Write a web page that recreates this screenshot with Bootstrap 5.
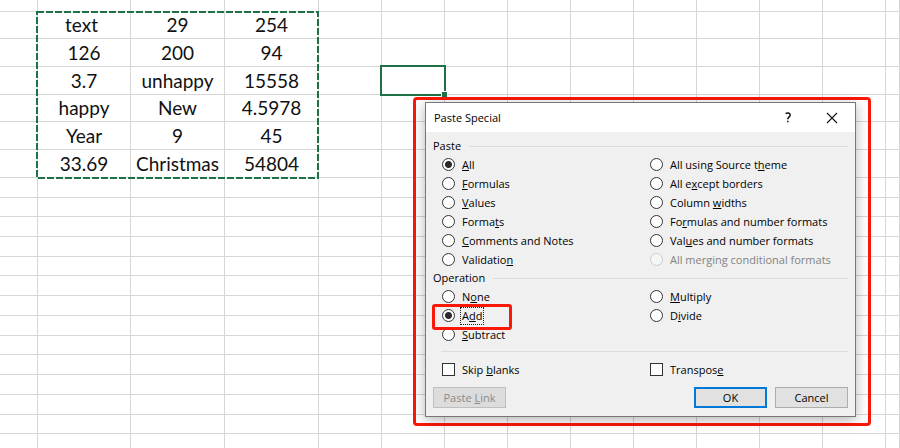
<!DOCTYPE html>
<html lang="en">
<head>
<meta charset="utf-8">
<meta name="viewport" content="width=device-width, initial-scale=1">
<title>Paste Special</title>
<link href="https://cdn.jsdelivr.net/npm/bootstrap@5.3.0/dist/css/bootstrap.min.css" rel="stylesheet">
<style>
  body { background: #fff; color: #111; overflow: hidden; min-height: 100vh; }

  /* Spreadsheet */
  .sheet { table-layout: fixed; border-collapse: separate; border-spacing: 0; font: 19px/26px Lato, "Open Sans", sans-serif; }
  .sheet td { padding: 0; border-right: 1px solid #d6d6d6; border-bottom: 1px solid #d6d6d6; text-align: center; white-space: nowrap; }
  .c-edge { width: 38px; }
  .c-wide { width: 94px; }
  .c-first { width: 93px; }
  .c-std { width: 63px; }
  .r-top td { height: 12px; }
  .r-27 td { height: 27px; }
  .r-28 td { height: 28px; }
  .r-19 td { height: 19px; }
  .r-20 td { height: 20px; }
  .ants { left: -2px; top: -1px; width: 283px; height: 168px; pointer-events: none; z-index: 1; }
  .active-cell { inset: -2px; border: 2px solid #1e7145; z-index: 1; }
  .active-cell::after { content: ""; position: absolute; right: -4px; bottom: -4px; width: 7px; height: 7px; background: #1e7145; border: 1px solid #fff; }

  /* Dialog */
  .callout-frame { left: 413px; top: 97px; width: 458px; padding: 2px 12px 6px 9px; border: 3px solid #fb1808; border-radius: 4px; z-index: 3; }
  .dlg { background: #f0f0f0; border: 1px solid #777; box-shadow: 0 3px 12px rgba(0,0,0,.3); font: 11px/14px "Open Sans", "Noto Sans", sans-serif; color: #000; }
  .dlg-title { background: #fff; height: 29px; padding: 0 1px 0 8px; }
  .dlg-title h1 { font-size: 11px; line-height: 14px; font-weight: 400; }
  .icon-btn { width: 44px; height: 28px; border: 0; background: none; padding: 0; color: #111; }
  .dlg-body { padding: 7px 7px 8px; }
  .dlg fieldset + fieldset { margin-top: 2px; }
  .group-head { height: 14px; font-size: 11px; line-height: 14px; }
  .rule { height: 1px; background: #dcdcdc; }
  .section-rule { margin: 7px 0 0 8px; }
  .options { padding: 2px 0 0 9px; }
  .options-col { flex: none; width: 208px; }
  .opt { height: 19px; gap: 7px; }
  .opt input { appearance: none; width: 13px; height: 13px; margin: 0; border: 1px solid #333; background: #fff; flex: none; }
  .opt input[type=radio] { border-radius: 50%; }
  .opt input[type=radio]:checked { background: radial-gradient(circle, #2b2b2b 3px, #fff 4px); }
  .opt input:disabled { border-color: #ccc; background: #f6f6f6; }
  .opt input:disabled + label { color: #838383; }
  .focus-box { outline: 1px dotted #222; outline-offset: 1px; }
  .callout-add { left: -10px; top: -2px; width: 80px; height: 26px; border: 3px solid #fb1808; border-radius: 3px; pointer-events: none; z-index: 2; }
  .dlg-btn { width: 73px; height: 21px; padding: 0; border: 1px solid #adadad; background: #e1e1e1; color: #000; }
  .dlg-btn:disabled { border-color: #bfbfbf; background: #dcdcdc; color: #8a8a8a; }
  .dlg-btn.default-btn { border: 2px solid #0078d7; }
</style>
</head>
<body>
<main class="position-relative">
  <table class="sheet w-100">
    <colgroup>
      <col class="c-edge"><col class="c-first"><col class="c-wide"><col class="c-wide">
      <col class="c-std"><col class="c-std"><col class="c-std"><col class="c-std"><col class="c-std"><col class="c-std"><col class="c-std"><col class="c-std"><col class="c-std"><col>
    </colgroup>
    <tbody>
      <tr class="r-top"><td></td><td></td><td></td><td></td><td></td><td></td><td></td><td></td><td></td><td></td><td></td><td></td><td></td><td></td></tr>
      <tr class="r-27"><td></td><td class="position-relative">text&nbsp;<svg class="ants position-absolute" aria-hidden="true"><rect x="1" y="1" width="281" height="166" fill="none" stroke="#1e7145" stroke-width="2" stroke-dasharray="7 2"/></svg></td><td>29</td><td>254</td><td></td><td></td><td></td><td></td><td></td><td></td><td></td><td></td><td></td><td></td></tr>
      <tr class="r-28"><td></td><td>126</td><td>200</td><td>94</td><td></td><td></td><td></td><td></td><td></td><td></td><td></td><td></td><td></td><td></td></tr>
      <tr class="r-28"><td></td><td>3.7</td><td>unhappy</td><td>15558</td><td></td><td class="position-relative"><div class="active-cell position-absolute"></div></td><td></td><td></td><td></td><td></td><td></td><td></td><td></td><td></td></tr>
      <tr class="r-27"><td></td><td>happy</td><td>New</td><td>4.5978</td><td></td><td></td><td></td><td></td><td></td><td></td><td></td><td></td><td></td><td></td></tr>
      <tr class="r-28"><td></td><td>Year</td><td>9</td><td>45</td><td></td><td></td><td></td><td></td><td></td><td></td><td></td><td></td><td></td><td></td></tr>
      <tr class="r-28"><td></td><td>33.69</td><td>Christmas</td><td>54804</td><td></td><td></td><td></td><td></td><td></td><td></td><td></td><td></td><td></td><td></td></tr>
      <tr class="r-20"><td></td><td></td><td></td><td></td><td></td><td></td><td></td><td></td><td></td><td></td><td></td><td></td><td></td><td></td></tr>
      <tr class="r-19"><td></td><td></td><td></td><td></td><td></td><td></td><td></td><td></td><td></td><td></td><td></td><td></td><td></td><td></td></tr>
      <tr class="r-20"><td></td><td></td><td></td><td></td><td></td><td></td><td></td><td></td><td></td><td></td><td></td><td></td><td></td><td></td></tr>
      <tr class="r-20"><td></td><td></td><td></td><td></td><td></td><td></td><td></td><td></td><td></td><td></td><td></td><td></td><td></td><td></td></tr>
      <tr class="r-19"><td></td><td></td><td></td><td></td><td></td><td></td><td></td><td></td><td></td><td></td><td></td><td></td><td></td><td></td></tr>
      <tr class="r-20"><td></td><td></td><td></td><td></td><td></td><td></td><td></td><td></td><td></td><td></td><td></td><td></td><td></td><td></td></tr>
      <tr class="r-20"><td></td><td></td><td></td><td></td><td></td><td></td><td></td><td></td><td></td><td></td><td></td><td></td><td></td><td></td></tr>
      <tr class="r-20"><td></td><td></td><td></td><td></td><td></td><td></td><td></td><td></td><td></td><td></td><td></td><td></td><td></td><td></td></tr>
      <tr class="r-19"><td></td><td></td><td></td><td></td><td></td><td></td><td></td><td></td><td></td><td></td><td></td><td></td><td></td><td></td></tr>
      <tr class="r-20"><td></td><td></td><td></td><td></td><td></td><td></td><td></td><td></td><td></td><td></td><td></td><td></td><td></td><td></td></tr>
      <tr class="r-20"><td></td><td></td><td></td><td></td><td></td><td></td><td></td><td></td><td></td><td></td><td></td><td></td><td></td><td></td></tr>
      <tr class="r-20"><td></td><td></td><td></td><td></td><td></td><td></td><td></td><td></td><td></td><td></td><td></td><td></td><td></td><td></td></tr>
      <tr class="r-19"><td></td><td></td><td></td><td></td><td></td><td></td><td></td><td></td><td></td><td></td><td></td><td></td><td></td><td></td></tr>
      <tr class="r-20"><td></td><td></td><td></td><td></td><td></td><td></td><td></td><td></td><td></td><td></td><td></td><td></td><td></td><td></td></tr>
    </tbody>
  </table>

  <div class="callout-frame position-absolute">
    <form class="dlg" role="dialog" aria-labelledby="dlg-name">
      <div class="dlg-title d-flex align-items-center">
        <h1 class="m-0 me-auto" id="dlg-name">Paste Special</h1>
        <button type="button" class="icon-btn d-flex align-items-center justify-content-center" aria-label="Help">
          <svg width="8" height="11" viewBox="0 0 8 11" fill="none" stroke="currentColor" stroke-width="1.5"><path d="M1.6 1.7C3.4.4 6.2.9 6.2 3c0 1.900-2.400 2-2.400 4.300"/><path d="M3.800 8.800v1.500"/></svg>
        </button>
        <button type="button" class="icon-btn d-flex align-items-center justify-content-center" aria-label="Close">
          <svg width="12" height="12" viewBox="0 0 12 12" fill="none" stroke="currentColor" stroke-width="1.1"><path d="M1 1l10 10M11 1L1 11"/></svg>
        </button>
      </div>
      <div class="dlg-body">
        <fieldset>
          <div class="group-head d-flex align-items-center gap-2"><span>Paste</span><span class="rule flex-grow-1"></span></div>
          <div class="options d-flex">
            <div class="options-col">
              <div class="opt d-flex align-items-center"><input type="radio" name="paste" id="p1" checked><label for="p1"><u>A</u>ll</label></div>
              <div class="opt d-flex align-items-center"><input type="radio" name="paste" id="p2"><label for="p2"><u>F</u>ormulas</label></div>
              <div class="opt d-flex align-items-center"><input type="radio" name="paste" id="p3"><label for="p3"><u>V</u>alues</label></div>
              <div class="opt d-flex align-items-center"><input type="radio" name="paste" id="p4"><label for="p4">Forma<u>t</u>s</label></div>
              <div class="opt d-flex align-items-center"><input type="radio" name="paste" id="p5"><label for="p5"><u>C</u>omments and Notes</label></div>
              <div class="opt d-flex align-items-center"><input type="radio" name="paste" id="p6"><label for="p6">Validatio<u>n</u></label></div>
            </div>
            <div class="options-col">
              <div class="opt d-flex align-items-center"><input type="radio" name="paste" id="p7"><label for="p7">All using Source t<u>h</u>eme</label></div>
              <div class="opt d-flex align-items-center"><input type="radio" name="paste" id="p8"><label for="p8">All e<u>x</u>cept borders</label></div>
              <div class="opt d-flex align-items-center"><input type="radio" name="paste" id="p9"><label for="p9">Column <u>w</u>idths</label></div>
              <div class="opt d-flex align-items-center"><input type="radio" name="paste" id="p10"><label for="p10">Fo<u>r</u>mulas and number formats</label></div>
              <div class="opt d-flex align-items-center"><input type="radio" name="paste" id="p11"><label for="p11">Val<u>u</u>es and number formats</label></div>
              <div class="opt d-flex align-items-center"><input type="radio" name="paste" id="p12" disabled><label for="p12">All mer<u>g</u>ing conditional formats</label></div>
            </div>
          </div>
        </fieldset>
        <fieldset>
          <div class="group-head d-flex align-items-center gap-2"><span>Operation</span><span class="rule flex-grow-1"></span></div>
          <div class="options d-flex">
            <div class="options-col">
              <div class="opt d-flex align-items-center"><input type="radio" name="op" id="o1"><label for="o1">N<u>o</u>ne</label></div>
              <div class="opt d-flex align-items-center position-relative"><input type="radio" name="op" id="o2" checked><label class="focus-box" for="o2">A<u>d</u>d</label><span class="callout-add position-absolute"></span></div>
              <div class="opt d-flex align-items-center"><input type="radio" name="op" id="o3"><label for="o3"><u>S</u>ubtract</label></div>
            </div>
            <div class="options-col">
              <div class="opt d-flex align-items-center"><input type="radio" name="op" id="o4"><label for="o4"><u>M</u>ultiply</label></div>
              <div class="opt d-flex align-items-center"><input type="radio" name="op" id="o5"><label for="o5">D<u>i</u>vide</label></div>
            </div>
          </div>
        </fieldset>
        <div class="rule section-rule"></div>
        <div class="options d-flex pt-2">
          <div class="options-col"><div class="opt d-flex align-items-center"><input type="checkbox" id="k1"><label for="k1">Skip <u>b</u>lanks</label></div></div>
          <div class="options-col"><div class="opt d-flex align-items-center"><input type="checkbox" id="k2"><label for="k2">Transpos<u>e</u></label></div></div>
        </div>
        <div class="d-flex mt-2">
          <button type="button" class="dlg-btn me-auto" disabled>Paste <u>L</u>ink</button>
          <button type="submit" class="dlg-btn default-btn">OK</button>
          <button type="button" class="dlg-btn ms-2">Cancel</button>
        </div>
      </div>
    </form>
  </div>
</main>
<script src="https://cdn.jsdelivr.net/npm/bootstrap@5.3.0/dist/js/bootstrap.bundle.min.js"></script>
</body>
</html>
